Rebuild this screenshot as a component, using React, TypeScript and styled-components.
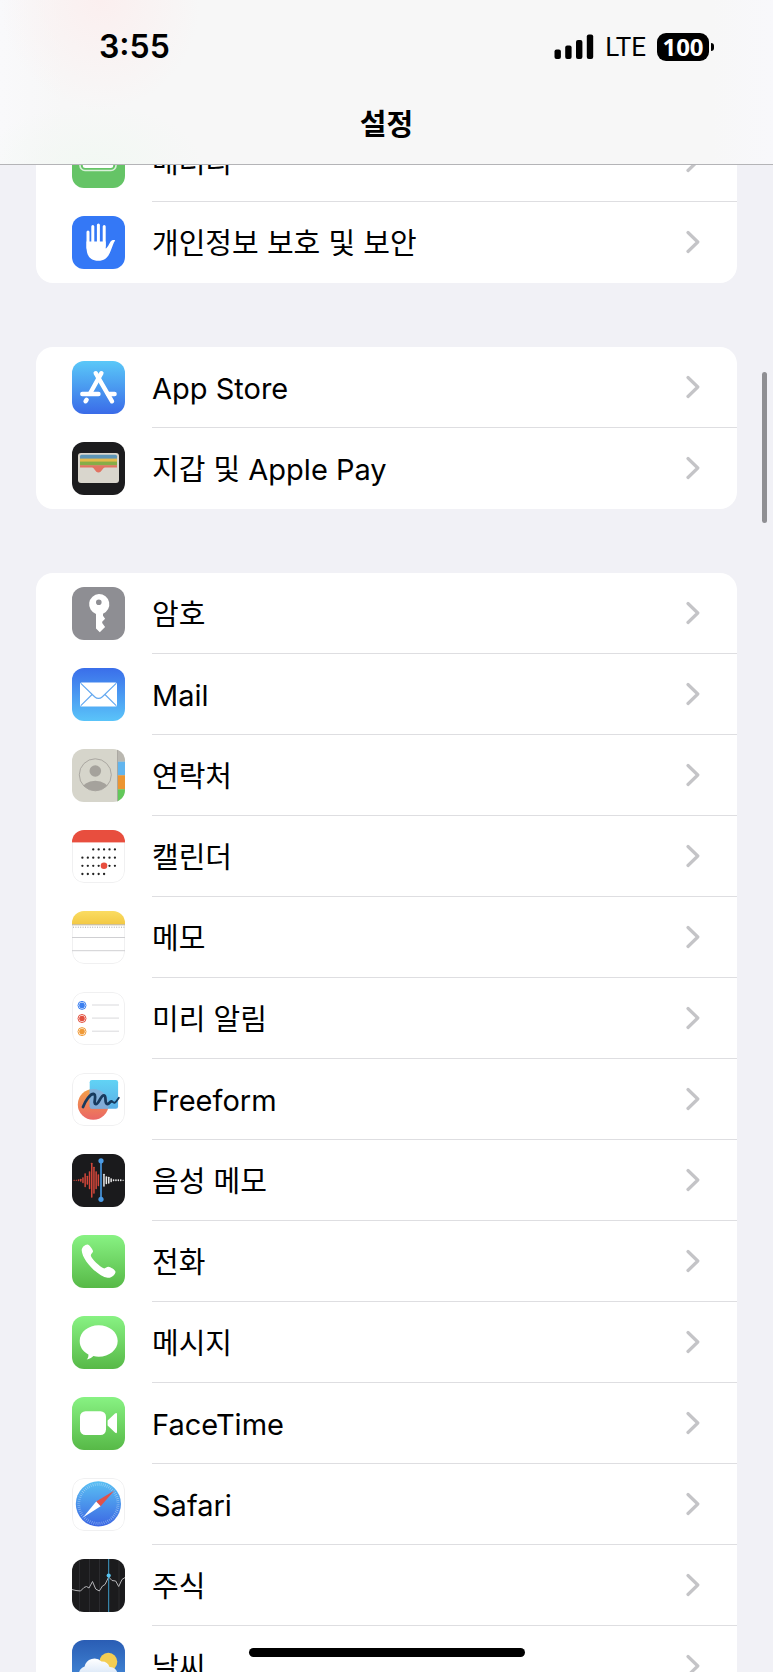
import React from 'react';
import styled, { createGlobalStyle } from 'styled-components';

const GlobalStyle = createGlobalStyle`
  *, *::before, *::after { box-sizing: border-box; }
  body {
    margin: 0;
    background: #f1f1f6;
    color: #000;
    font-family: Inter, "Noto Sans CJK KR", sans-serif;
  }
`;

const Screen = styled.div`
  position: relative;
  height: 100vh;
  overflow: hidden;
  background: #f1f1f6;
`;

const Header = styled.header`
  position: absolute;
  top: 0;
  left: 0;
  right: 0;
  z-index: 1;
  border-bottom: 1px solid #b4b4b7;
  background:
    radial-gradient(ellipse 100px 110px at 13% 0, #fbefef 0%, rgba(251, 239, 239, 0) 100%),
    radial-gradient(ellipse 110px 60px at 12% 100%, #f2f8f3 0%, rgba(242, 248, 243, 0) 100%),
    linear-gradient(90deg, #f9f9fb 0%, #f7f7f7 8%, #f7f7f7 92%, #f8f8fb 100%);
`;

const StatusBar = styled.div`
  display: flex;
  align-items: center;
  justify-content: space-between;
  height: 94px;
  padding: 0 60px 0 99px;
`;

const Clock = styled.time`
  font-size: 32px;
  line-height: 40px;
  font-weight: 600;
`;

const StatusGroup = styled.div`
  display: flex;
  align-items: center;
  gap: 11px;
`;

const Carrier = styled.span`
  font-size: 26px;
  line-height: 32px;
  font-family: Roboto, sans-serif;
`;

const Battery = styled.span`
  position: relative;
  width: 52px;
  height: 28px;
  margin-right: 4px;
  border-radius: 9px;
  background: #000;
  color: #fff;
  font-size: 24px;
  line-height: 28px;
  font-weight: 700;
  font-family: "Open Sans", sans-serif;
  text-align: center;

  &::after {
    content: "";
    position: absolute;
    top: 10px;
    right: -5px;
    width: 3px;
    height: 8px;
    border-radius: 0 4px 4px 0;
    background: #000;
  }
`;

const Title = styled.h1`
  margin: 0;
  height: 70px;
  font-size: 29px;
  line-height: 62px;
  font-weight: 600;
  text-align: center;
`;

const Content = styled.main`
  display: flex;
  flex-direction: column;
  gap: 64px;
  padding: 121px 36px 0;
`;

const Group = styled.ul`
  margin: 0;
  padding: 0;
  list-style: none;
  border-radius: 17px;
  background: #fff;
`;

const RowLink = styled.a`
  display: flex;
  align-items: center;
  gap: 27px;
  padding-left: 36px;
  color: inherit;
  text-decoration: none;
`;

const AppIcon = styled.svg`
  flex: none;
  width: 53px;
  height: 53px;
  border-radius: 12px;
`;

const RowBody = styled.span<{ $divided: boolean }>`
  display: flex;
  flex: 1;
  align-items: center;
  justify-content: space-between;
  height: 81px;
  padding-right: 37px;
  border-bottom: 1px solid ${(p) => (p.$divided ? '#dedee1' : 'transparent')};
`;

const Label = styled.span`
  padding-top: 4px;
  font-size: 29px;
  line-height: 40px;
`;

const ScrollThumb = styled.div`
  position: absolute;
  top: 372px;
  right: 6px;
  z-index: 1;
  width: 5px;
  height: 151px;
  border-radius: 3px;
  background: #8f8f93;
`;

const HomeIndicator = styled.div`
  position: absolute;
  bottom: 15px;
  left: 50%;
  z-index: 1;
  width: 276px;
  height: 9px;
  border-radius: 5px;
  background: #000;
  transform: translateX(-50%);
`;

const Chevron = () => (
  <svg width="14" height="24" viewBox="0 0 14 24" fill="none" aria-hidden="true">
    <path d="M2 2.5 11.8 12 2 21.5" stroke="#c4c4c7" strokeWidth="3.2" strokeLinecap="round" strokeLinejoin="round" />
  </svg>
);

const Signal = () => (
  <svg width="40" height="26" viewBox="0 0 40 26" role="img" aria-label="신호 강도">
    <rect x="0.5" y="15.5" width="6.4" height="9.5" rx="2" />
    <rect x="11.2" y="11.5" width="6.4" height="13.5" rx="2" />
    <rect x="22" y="6" width="6.4" height="19" rx="2" />
    <rect x="32.8" y="0.5" width="6.4" height="24.5" rx="2" />
  </svg>
);

const Gradient = ({ id, from, to }: { id: string; from: string; to: string }) => (
  <linearGradient id={id} x1="0" y1="0" x2="0" y2="1">
    <stop offset="0" stopColor={from} />
    <stop offset="1" stopColor={to} />
  </linearGradient>
);

const Tile = ({ fill }: { fill: string }) => <rect width="53" height="53" fill={fill} />;

const WhiteEdge = () => (
  <rect x="0.5" y="0.5" width="52" height="52" rx="11.5" fill="none" stroke="#f0f0f1" />
);

const battery = (
  <>
    <Tile fill="#65c466" />
    <rect x="8" y="17" width="36" height="18.5" rx="5" fill="none" stroke="#d9f0d9" strokeWidth="1.6" />
    <rect x="10.8" y="20" width="30.4" height="13" rx="2.5" fill="#fff" />
  </>
);

const hand = (
  <>
    <Tile fill="#3478f6" />
    <path d="M16 16V32M20.8 10.5V30M26.4 9V30M32.2 10.5V30" stroke="#fff" strokeWidth="3" strokeLinecap="round" />
    <path d="M14.5 25.5H33.7V32.5C35.5 32 36.8 28.3 38.3 26 39.6 24.1 41.5 23.6 43.2 24.4 41.5 26.5 40.6 30 39.2 33.6 36.8 40.5 33.5 44.8 26.4 44.8 18 44.8 14.5 39.5 14.5 31Z" fill="#fff" />
  </>
);

const appStore = (
  <>
    <defs><Gradient id="g-store" from="#5ac8f8" to="#3a6be8" /></defs>
    <Tile fill="url(#g-store)" />
    <g stroke="#fff" strokeWidth="4.4" strokeLinecap="round" fill="none">
      <path d="M23.7 12.2 40 40.3" />
      <path d="M29.4 12.2 18.3 32" />
      <path d="M14.6 38.8 13.6 40.3" />
      <path d="M10.3 33H26.5M36 33H42.6" />
    </g>
  </>
);

const wallet = (
  <>
    <Tile fill="#1c1c1e" />
    <rect x="6" y="11" width="41" height="30" rx="3" fill="#d9d6cd" />
    <rect x="8" y="12.8" width="37" height="6" rx="1.5" fill="#5e96b6" />
    <rect x="8" y="16.6" width="37" height="4" fill="#e5b94a" />
    <rect x="8" y="19.6" width="37" height="4" fill="#86ad47" />
    <path d="M8 23.3H45V25.6H33C30.5 25.6 30 30.5 26.5 30.5S22.5 25.6 20 25.6H8Z" fill="#e27362" />
  </>
);

const key = (
  <>
    <Tile fill="#8e8e93" />
    <path fillRule="evenodd" d="M26.9 7A10.3 10.3 0 0 1 31 26.8V28.7L33.1 31.7 30.2 34.8V36L33.1 39.9 27.8 45.3 24 41.5V27A10.3 10.3 0 0 1 26.9 7ZM26.8 12.5A2.8 2.8 0 1 0 26.8 18.1 2.8 2.8 0 1 0 26.8 12.5Z" fill="#fff" />
  </>
);

const mail = (
  <>
    <defs><Gradient id="g-mail" from="#3a6eea" to="#5ac4f9" /></defs>
    <Tile fill="url(#g-mail)" />
    <rect x="8" y="14.6" width="37" height="23.8" rx="1.5" fill="#fff" />
    <path d="M8.8 15.4 22.6 28.7Q26.5 32.2 30.4 28.7L44.2 15.4M8.8 37.6 19.8 26.8M44.2 37.6 33.2 26.8" fill="none" stroke="#65a9f0" strokeWidth="1.2" />
  </>
);

const contacts = (
  <>
    <defs><clipPath id="c-face"><circle cx="23.3" cy="25.8" r="16" /></clipPath></defs>
    <Tile fill="#d6d5cb" />
    <rect x="45.7" width="7.3" height="12.7" fill="#b9b7b0" />
    <rect x="45.7" y="12.7" width="7.3" height="13.6" fill="#62b5ee" />
    <rect x="45.7" y="26.3" width="7.3" height="14" fill="#ec9532" />
    <rect x="45.7" y="40.3" width="7.3" height="13" fill="#62c85a" />
    <path d="M45.5 0V53" stroke="#9c9a94" strokeWidth="0.7" />
    <circle cx="23.3" cy="25.8" r="16" fill="none" stroke="#a5a29c" strokeWidth="0.9" />
    <circle cx="23.3" cy="22" r="5.8" fill="#a5a29c" />
    <ellipse cx="23.3" cy="41" rx="13.5" ry="9.3" fill="#a5a29c" clipPath="url(#c-face)" />
  </>
);

const calendarRows = [
  { y: 19.4, from: 2, to: 6 },
  { y: 27.7, from: 0, to: 6 },
  { y: 35.8, from: 0, to: 6 },
  { y: 44, from: 0, to: 4 },
];

const calendar = (
  <>
    <Tile fill="#fff" />
    <WhiteEdge />
    <rect width="53" height="12.4" fill="#e84e3e" />
    {calendarRows.map((row) =>
      Array.from({ length: row.to - row.from + 1 }, (_, i) => (
        <circle key={`${row.y}-${i}`} cx={10.4 + (row.from + i) * 5.42} cy={row.y} r="1.15" fill="#222" />
      )),
    )}
    <circle cx="32" cy="35.8" r="3.3" fill="#e84e3e" />
  </>
);

const notes = (
  <>
    <defs><Gradient id="g-notes" from="#fadc62" to="#f3c944" /></defs>
    <Tile fill="#fff" />
    <WhiteEdge />
    <rect width="53" height="13.3" fill="url(#g-notes)" />
    <path d="M0 13.8H53" stroke="#b9ad8e" strokeWidth="1" />
    <path d="M1 16.2H53" stroke="#a9a9a9" strokeWidth="1" strokeDasharray="1 1.4" />
    <path d="M0 26.5H53M0 39.7H53" stroke="#cfcfd2" strokeWidth="1" />
  </>
);

const reminders = (
  <>
    <Tile fill="#fff" />
    <WhiteEdge />
    {['#3b7ff0', '#e2503f', '#f09a37'].map((color, i) => (
      <g key={color}>
        <circle cx="10" cy={13.4 + i * 13.1} r="4" fill="#fff" stroke={color} strokeWidth="1" />
        <circle cx="10" cy={13.4 + i * 13.1} r="2.8" fill={color} />
        <path d={`M20 ${13 + i * 13.1}H47`} stroke="#d5d5d8" strokeWidth="0.9" />
      </g>
    ))}
  </>
);

const freeform = (
  <>
    <defs>
      <Gradient id="g-ff-sq" from="#61d3f5" to="#5aafe6" />
      <Gradient id="g-ff-c" from="#f3a047" to="#ea6666" />
      <clipPath id="c-ff"><circle cx="21.2" cy="31.4" r="15.4" /></clipPath>
    </defs>
    <Tile fill="#fff" />
    <WhiteEdge />
    <circle cx="21.2" cy="31.4" r="15.4" fill="url(#g-ff-c)" />
    <rect x="17.7" y="7" width="28.4" height="28.7" rx="2.2" fill="url(#g-ff-sq)" />
    <rect x="17.7" y="7" width="28.4" height="28.7" rx="2.2" fill="#8fa9d2" clipPath="url(#c-ff)" opacity="0.75" />
    <path d="M11 34C13.5 27.5 18.4 20.6 21.6 21 25.4 21.6 20.6 31 23.8 31.2 27 31.3 28.6 22 32 22.4 35 22.8 31.8 30.8 35.4 31 37.6 31 37.6 28.4 39.4 28.4" fill="none" stroke="#173a5e" strokeWidth="2.8" strokeLinecap="round" strokeLinejoin="round" />
    <path d="M39.4 28.4C41.4 28.6 41.4 30.4 43 29.6 44.8 28.4 45.6 26.2 46.8 24.8" fill="none" stroke="#173a5e" strokeWidth="1.8" strokeLinecap="round" />
  </>
);

const voiceRed = [1, 1, 2, 3, 6, 14, 9, 18, 35, 27, 18, 12];
const voiceWhite = [13, 8, 7, 4, 2, 2, 2, 2, 1];

const voiceMemos = (
  <>
    <Tile fill="#1a1a1c" />
    {voiceRed.map((h, i) => (
      <rect key={i} x={1.4 + i * 2.2} y={26.2 - h / 2} width="1.5" height={h} rx="0.6" fill="#d3473a" />
    ))}
    {voiceWhite.map((h, i) => (
      <rect key={i} x={31.2 + i * 2.4} y={26.2 - h / 2} width="1.5" height={h} rx="0.6" fill="#e8e8e8" />
    ))}
    <path d="M29 7V45" stroke="#4a9be6" strokeWidth="1.6" />
    <circle cx="29" cy="6.8" r="2.6" fill="#4a9be6" />
    <circle cx="29" cy="45.3" r="2.6" fill="#4a9be6" />
  </>
);

const phone = (
  <>
    <defs><Gradient id="g-phone" from="#88f283" to="#57b947" /></defs>
    <Tile fill="url(#g-phone)" />
    <path d="M15.4 9.4C17.2 9.2 20.2 13.5 21 16 21.4 17.8 18.8 18.8 18.8 20.6 19.4 23.8 28.2 32.2 31.6 33.3 33.6 33.8 34.6 31.7 36.4 31.8 38.4 32 43.3 34.8 43.5 36.8 43.5 39.4 39.6 43.3 35.6 42.8 25.6 41.2 10.2 25.4 9.7 15.2 9.7 12.2 12.8 9.6 15.4 9.4Z" fill="#fff" />
  </>
);

const messages = (
  <>
    <defs><Gradient id="g-msg" from="#88f283" to="#57b947" /></defs>
    <Tile fill="url(#g-msg)" />
    <path d="M26.7 9.3C37.2 9.3 45.7 16.2 45.7 25S37.2 40.7 26.7 40.7C24.8 40.7 23 40.5 21.4 40.1 19.6 42 17.2 43.2 14.7 43.4 16 42.3 16.6 40.4 16.4 38.4 11 35.8 7.7 30.8 7.7 25 7.7 16.2 16.2 9.3 26.7 9.3Z" fill="#fff" />
  </>
);

const faceTime = (
  <>
    <defs><Gradient id="g-ft" from="#88f283" to="#57b947" /></defs>
    <Tile fill="url(#g-ft)" />
    <rect x="8" y="14.2" width="26" height="23.8" rx="5.5" fill="#fff" />
    <path d="M35.6 23.6 43 16.6Q45 15.2 45 17.5V34.7Q45 37 43 35.6L35.6 28.6Z" fill="#fff" />
  </>
);

const safari = (
  <>
    <defs><Gradient id="g-saf" from="#5ac0f3" to="#3c67e3" /></defs>
    <Tile fill="#fff" />
    <WhiteEdge />
    <circle cx="26.4" cy="25.9" r="22.6" fill="url(#g-saf)" />
    <circle cx="26.4" cy="25.9" r="19.6" fill="none" stroke="#cfe6fb" strokeWidth="2.8" strokeDasharray="0.5 1.55" opacity="0.7" />
    <path d="M42.4 12.4 24.2 23.5 28.6 28.3Z" fill="#e0524b" />
    <path d="M11 39.4 24.2 23.5 28.6 28.3Z" fill="#fff" />
  </>
);

const stocks = (
  <>
    <Tile fill="#1b1b1d" />
    <path d="M7.5 0V53M17.5 0V53M27.5 0V53M47 0V53" stroke="#303033" strokeWidth="0.8" />
    <path d="M0 30.5 4 31.5 8.5 32 12 28.5 14.5 27.5 17 29 20.5 22.5 23.7 30 27.3 32 30.5 27 33 25.5 36.7 18 40 21.5 43.7 22 46.7 27.5 50 20.5 53 18.5" fill="none" stroke="#b5b5b8" strokeWidth="1" strokeLinejoin="round" />
    <path d="M36.7 0V53" stroke="#3e9dcb" strokeWidth="1" />
    <circle cx="36.7" cy="16.5" r="2.1" fill="#5ac3ee" />
  </>
);

const weather = (
  <>
    <defs>
      <Gradient id="g-wea" from="#2a5db4" to="#4a95e2" />
      <Gradient id="g-cloud" from="#ffffff" to="#c9dcf4" />
    </defs>
    <Tile fill="url(#g-wea)" />
    <circle cx="36.3" cy="21.8" r="9" fill="#f3cd53" />
    <path d="M14 42A8 8 0 0 1 12.6 26.4 10 10 0 0 1 29.5 21.5 8 8 0 0 1 37.5 27 7.3 7.3 0 0 1 38.5 42Z" fill="url(#g-cloud)" />
  </>
);

type Item = { id: string; label: string; icon: React.ReactNode };

const groups: Item[][] = [
  [
    { id: 'battery', label: '배터리', icon: battery },
    { id: 'privacy', label: '개인정보 보호 및 보안', icon: hand },
  ],
  [
    { id: 'app-store', label: 'App Store', icon: appStore },
    { id: 'wallet', label: '지갑 및 Apple Pay', icon: wallet },
  ],
  [
    { id: 'passwords', label: '암호', icon: key },
    { id: 'mail', label: 'Mail', icon: mail },
    { id: 'contacts', label: '연락처', icon: contacts },
    { id: 'calendar', label: '캘린더', icon: calendar },
    { id: 'notes', label: '메모', icon: notes },
    { id: 'reminders', label: '미리 알림', icon: reminders },
    { id: 'freeform', label: 'Freeform', icon: freeform },
    { id: 'voice-memos', label: '음성 메모', icon: voiceMemos },
    { id: 'phone', label: '전화', icon: phone },
    { id: 'messages', label: '메시지', icon: messages },
    { id: 'facetime', label: 'FaceTime', icon: faceTime },
    { id: 'safari', label: 'Safari', icon: safari },
    { id: 'stocks', label: '주식', icon: stocks },
    { id: 'weather', label: '날씨', icon: weather },
  ],
];

export default function App() {
  return (
    <Screen>
      <GlobalStyle />
      <Header>
        <StatusBar>
          <Clock>3:55</Clock>
          <StatusGroup>
            <Signal />
            <Carrier>LTE</Carrier>
            <Battery>100</Battery>
          </StatusGroup>
        </StatusBar>
        <Title>설정</Title>
      </Header>
      <Content>
        {groups.map((items) => (
          <Group key={items[0].id}>
            {items.map((item, i) => (
              <li key={item.id}>
                <RowLink href={`#${item.id}`}>
                  <AppIcon viewBox="0 0 53 53" aria-hidden="true">{item.icon}</AppIcon>
                  <RowBody $divided={i < items.length - 1}>
                    <Label>{item.label}</Label>
                    <Chevron />
                  </RowBody>
                </RowLink>
              </li>
            ))}
          </Group>
        ))}
      </Content>
      <ScrollThumb />
      <HomeIndicator />
    </Screen>
  );
}
